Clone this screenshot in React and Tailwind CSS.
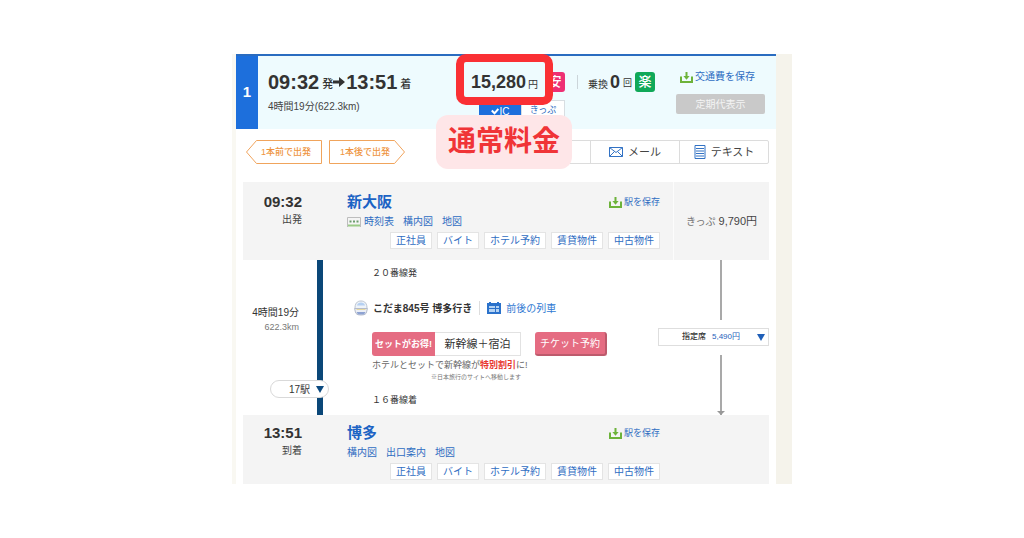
import { useState } from 'react';

const TAGS = ['正社員', 'バイト', 'ホテル予約', '賃貸物件', '中古物件'];

function SaveIcon() {
  return (
    <svg viewBox="0 0 13 11" className="w-[13px] h-[11px] shrink-0" fill="none" stroke="#6db33a">
      <path d="M1 4.5V10h11V4.5" strokeWidth="2" />
      <path d="M6.5 0v5" strokeWidth="2" />
      <path d="M3.4 4h6.2L6.5 7.8z" fill="#6db33a" stroke="none" />
    </svg>
  );
}

function TimetableIcon() {
  return (
    <svg viewBox="0 0 14 12" className="w-[14px] h-3 shrink-0" fill="none">
      <path d="M.5 11V1.5h13V11" stroke="#bdbdbd" />
      <path d="M1 9.5h12" stroke="#9acb86" strokeWidth="2" />
      <path d="M2.500 5.500h9" stroke="#6b9c6c" strokeWidth="2" strokeDasharray="2 1.5" />
    </svg>
  );
}

function TrainIcon() {
  return (
    <svg viewBox="0 0 14 16" className="w-[14px] h-4 shrink-0">
      <path d="M1 9C.8 3.500 3 1 7 1s6.200 2.500 6 8z" fill="#eef3f9" stroke="#bcc4d0" />
      <path d="M3 5.500C3.500 3.300 5 2.500 7 2.500s3.500.8 4 3z" fill="#b5d0f2" />
      <path d="M.6 8.500h12.800l-.8 3.500c-.4 2-2 3-5.600 3s-5.200-1-5.600-3z" fill="#eceff5" stroke="#b4bbcb" />
      <path d="M2.500 12h9l-1.500 2.500H4z" fill="#8ea3d2" />
      <path d="M2.500 9.500h9" stroke="#e6d9a0" />
    </svg>
  );
}

function CalendarIcon() {
  return (
    <svg viewBox="0 0 14 12" className="w-[14px] h-3 shrink-0">
      <path d="M2 0h2v1h6V0h2v1h2v11H0V1h2z" fill="#2b72cb" />
      <path d="M2 4h6v2H2zM2 7h6v3H2zM9 4h3v2H9zM9 7h3v3H9z" fill="#b5d3f3" />
    </svg>
  );
}

function MailIcon() {
  return (
    <svg viewBox="0 0 14 10" className="w-[14px] h-[10px] shrink-0" fill="none" stroke="#3272c4">
      <path d="M.5.5h13v9H.5z" />
      <path d="M.5.5l6.500 5 6.500-5M.5 9.500l5-5M13.500 9.500l-5-5" />
    </svg>
  );
}

function TextIcon() {
  return (
    <svg viewBox="0 0 12 14" className="w-3 h-[14px] shrink-0" fill="none" stroke="#3272c4">
      <path d="M1 .5h10v13H1z" />
      <path d="M2 3.500h8M2 6h8M2 8.500h8M2 11h8" />
    </svg>
  );
}

function Triangle() {
  return (
    <svg viewBox="0 0 8 7" className="w-2 h-[7px] shrink-0" fill="currentColor">
      <path d="M0 0h8L4 7z" />
    </svg>
  );
}

function ShiftButton({ label, next }) {
  return (
    <button className="relative w-[76px] h-6 pt-[2px] text-[9px] font-medium text-[#ee9440]">
      <svg viewBox="0 0 76 24" className="absolute inset-0 w-full h-full" fill="#fff" stroke="#f0a45c">
        {next ? (
          <path d="M.5.5h65L75.500 12l-10 11.500H.5z" />
        ) : (
          <path d="M75.500.5h-65L.5 12l10 11.500h65z" />
        )}
      </svg>
      <span className={next ? 'relative pr-1' : 'relative pl-1'}>{label}</span>
    </button>
  );
}

function Station({ time, kind, name, links, timetable, fare, className }) {
  return (
    <section className="flex bg-[#f4f4f4]">
      <div className={`w-[59px] text-right ${className}`}>
        <div className="text-[15px] leading-5 font-bold text-[#333]">{time}</div>
        <div className="text-[10px] leading-4 text-[#444]">{kind}</div>
      </div>
      <div className={`flex-1 pl-[45px] pr-[13px] ${className}`}>
        <div className="flex items-center justify-between">
          <h2 className="text-[15px] leading-5 font-bold text-[#1c63c4]">{name}</h2>
          <a href="#save" className="flex items-center gap-[2px] text-[9px] leading-5 text-[#2f6dc2]">
            <SaveIcon />
            駅を保存
          </a>
        </div>
        <div className="mt-[3px] flex items-center gap-[9px] text-[10px] leading-[14px] text-[#2f6dc2]">
          {links.map((link, i) => (
            <a key={link} href="#station" className="flex items-center gap-[3px]">
              {timetable && i === 0 && <TimetableIcon />}
              {link}
            </a>
          ))}
        </div>
        <div className="mt-[3px] flex justify-end gap-[5px]">
          {TAGS.map((tag) => (
            <a
              key={tag}
              href="#tag"
              className="border border-[#e4e4e4] bg-white px-[5px] text-[10px] leading-[15px] text-[#2f6dc2] whitespace-nowrap"
            >
              {tag}
            </a>
          ))}
        </div>
      </div>
      <div className={`w-24 flex items-center justify-center gap-[3px] text-[#444] ${fare ? 'border-l border-[#fcfcfc]' : ''}`}>
        {fare && (
          <>
            <span className="text-[10px] text-[#777]">きっぷ</span>
            <span className="text-[11px]">{fare}</span>
          </>
        )}
      </div>
    </section>
  );
}

export default function App() {
  const [seat, setSeat] = useState('5,490円');

  return (
    <div className="min-h-screen bg-white pt-[54px] font-['Liberation_Sans','Noto_Sans_CJK_JP',sans-serif] text-[#333]">
      <main className="mx-auto max-w-[560px] border-l-4 border-r-[16px] border-l-[#f9f8f2] border-r-[#f5f3eb]">
        <header className="flex border-t-2 border-[#2a6cc0] bg-[#eefbfe]">
          <div className="w-[22px] flex items-center justify-center bg-[#1d6fdc] text-[15px] font-bold text-white">1</div>
          <div className="flex-1 grid grid-cols-[1fr_106px_99px_89px] pl-[10px] pr-[11px] pt-4 pb-[7px]">
            <div>
              <div className="flex items-center h-5 font-bold">
                <span className="text-[20px]">09:32</span>
                <span className="ml-[3px] mt-1 text-[11px] font-medium">発</span>
                <svg viewBox="0 0 12 10" className="w-3 h-[10px] mr-[1px]" fill="#333">
                  <path d="M0 3.500h6V0l6 5-6 5V6.500H0z" />
                </svg>
                <span className="text-[20px]">13:51</span>
                <span className="ml-[3px] mt-1 text-[11px] font-medium">着</span>
              </div>
              <div className="mt-2 text-[10px] leading-[14px] text-[#444]">4時間19分(622.3km)</div>
            </div>

            <div className="relative">
              <div className="flex items-center h-5 pr-3">
                <span className="text-[18px] font-bold">15,280</span>
                <span className="ml-[2px] mt-1 text-[10px]">円</span>
                <span className="ml-auto w-5 h-5 rounded-[3px] bg-[#ee2f73] text-center text-[13px] leading-5 font-medium text-white">安</span>
              </div>
              <div className="mt-2 ml-2 mr-3 flex h-[22px] text-[9px]">
                <button className="flex-1 flex items-center justify-center gap-px bg-[#1d6fdc] text-[10px] text-white">
                  <svg viewBox="0 0 8 7" className="w-2 h-[7px]" fill="none" stroke="#fff" strokeWidth="2">
                    <path d="M.8 2.500L3.500 5.300 7.300 1" />
                  </svg>
                  IC
                </button>
                <button className="flex-1 border border-[#d8dee2] bg-white text-[#2f6dc2]">きっぷ</button>
              </div>
              <div className="absolute z-10 -left-[15px] -top-[18px] w-[97px] h-[51px] rounded-[10px] border-8 border-[#fa3034]" />
              <div className="absolute z-10 -left-[35px] top-[43px] w-[136px] h-[54px] rounded-xl bg-[#fee6e8] text-center text-[28px] leading-[54px] font-bold text-[#f03437] whitespace-nowrap">
                通常料金
              </div>
            </div>

            <div className="flex items-center h-5">
              <div className="h-[14px] border-l border-[#ccd5da]" />
              <span className="ml-[10px] mt-1 text-[10px]">乗換</span>
              <span className="ml-[2px] text-[18px] font-bold">0</span>
              <span className="ml-[3px] mt-1 text-[9px]">回</span>
              <span className="ml-[3px] w-5 h-5 rounded-[3px] bg-[#10a858] text-center text-[13px] leading-5 font-medium text-white">楽</span>
            </div>

            <div className="-mt-[2px]">
              <a href="#save" className="ml-1 flex items-center gap-[2px] text-[10px] leading-[14px] text-[#2f6dc2]">
                <SaveIcon />
                交通費を保存
              </a>
              <button disabled className="mt-[10px] w-full h-5 rounded-[2px] bg-[#c9c9c9] text-[10px] text-[#f4f4f4]">
                定期代表示
              </button>
            </div>
          </div>
        </header>

        <div className="px-[7px]">
          <nav className="flex justify-between pt-[11px] pb-[18px] pl-[3px]">
            <div className="flex gap-[7px]">
              <ShiftButton label="1本前で出発" />
              <ShiftButton label="1本後で出発" next />
            </div>
            <div className="flex h-6 divide-x divide-[#dcdcdc] rounded-[2px] border border-[#dcdcdc] text-[11px] text-[#444]">
              <div className="w-[88px]" />
              <button className="w-[89px] flex items-center justify-center gap-[5px]">
                <MailIcon />
                メール
              </button>
              <button className="w-[88px] flex items-center justify-center gap-[5px]">
                <TextIcon />
                テキスト
              </button>
            </div>
          </nav>

          <Station
            time="09:32"
            kind="出発"
            name="新大阪"
            links={['時刻表', '構内図', '地図']}
            timetable
            fare="9,790円"
            className="pt-[10px] pb-[11px]"
          />

          <section className="grid grid-cols-[74px_6px_1fr_111px]">
            <div className="flex flex-col items-end pt-[46px]">
              <div className="pr-[18px] text-[10px] leading-[14px] whitespace-nowrap">4時間19分</div>
              <div className="pr-[18px] text-[9px] leading-[14px] text-[#777]">622.3km</div>
              <button className="relative z-10 mt-[46px] -mr-3 w-[59px] h-[18px] shrink-0 flex items-center justify-end gap-[6px] rounded-full border border-[#d9d9d9] bg-white pr-1 text-[10px]">
                17駅
                <span className="text-[#0c4a80]">
                  <Triangle />
                </span>
              </button>
            </div>
            <div className="bg-[#0a4778]" />
            <div className="pl-[49px] pt-[6px] pb-2">
              <div className="text-[9px] leading-[14px]">２０番線発</div>
              <div className="-ml-[18px] mt-5 flex items-center h-4 text-[10px] whitespace-nowrap">
                <TrainIcon />
                <span className="ml-[5px] font-bold">こだま845号 博多行き</span>
                <span className="mx-[7px] h-[14px] border-l border-[#ddd]" />
                <a href="#trains" className="flex items-center gap-[5px] text-[#2f78d2]">
                  <CalendarIcon />
                  前後の列車
                </a>
              </div>
              <div className="mt-4 flex h-6 whitespace-nowrap">
                <a href="#hotel" className="flex w-[149px]">
                  <span className="w-[63px] rounded-l-[3px] bg-[#e56c82] text-center text-[9px] leading-6 font-bold text-white">
                    セットがお得!
                  </span>
                  <span className="flex-1 border border-l-0 border-[#e2e2e2] text-center text-[11px] leading-[22px]">
                    新幹線＋宿泊
                  </span>
                </a>
                <button className="ml-[14px] w-[72px] rounded-[3px] border-r-2 border-b-2 border-[#bd5a6c] bg-[#e56c82] text-[10px] text-white">
                  チケット予約
                </button>
              </div>
              <p className="mt-[3px] text-[9px] leading-3 text-[#666] whitespace-nowrap">
                ホテルとセットで新幹線が<b className="text-[#e8362e]">特別割引</b>に!
              </p>
              <p className="mt-[1px] w-[149px] text-right text-[6px] leading-[10px] text-[#777] whitespace-nowrap">
                ※日本旅行のサイトへ移動します
              </p>
              <div className="mt-[11px] text-[9px] leading-[14px]">１６番線着</div>
            </div>
            <div className="flex flex-col">
              <div className="ml-[62px] h-[60px] w-[2px] bg-[#a9a9a9]" />
              <div className="relative mt-2 mb-[9px] flex h-[18px] items-center border border-[#dedede] text-[8px]">
                <label htmlFor="seat" className="ml-[23px] font-medium">指定席</label>
                <select
                  id="seat"
                  value={seat}
                  onChange={(e) => setSeat(e.target.value)}
                  className="ml-[6px] flex-1 appearance-none bg-transparent text-[#1f62bb] outline-none"
                >
                  <option>5,490円</option>
                </select>
                <span className="pointer-events-none absolute right-[3px] text-[#1f5fb8]">
                  <Triangle />
                </span>
              </div>
              <div className="ml-[62px] w-[2px] flex-1 bg-[#a9a9a9] flex items-end justify-center">
                <svg viewBox="0 0 8 4" className="w-2 h-1 shrink-0" fill="#999">
                  <path d="M0 0h8L4 4z" />
                </svg>
              </div>
            </div>
          </section>

          <Station
            time="13:51"
            kind="到着"
            name="博多"
            links={['構内図', '出口案内', '地図']}
            className="pt-2 pb-1"
          />
        </div>
      </main>
    </div>
  );
}
